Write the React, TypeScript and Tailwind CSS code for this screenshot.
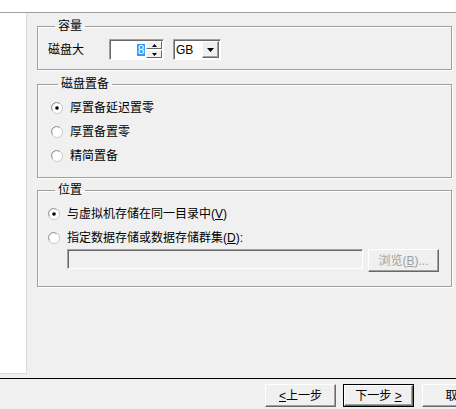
const font = "font-['Liberation_Sans','Noto_Sans_CJK_SC',sans-serif]";

function Radio({ checked }: { checked?: boolean }) {
  return (
    <svg width="12" height="12" viewBox="0 0 12 12" className="shrink-0">
      <circle cx="6" cy="6" r="5.5" fill="#fff" stroke="#c8c8c8" />
      <path d="M1.5 8.5 A5 5 0 0 1 8.5 1.5" fill="none" stroke="#9a9a9a" />
      {checked && <circle cx="6" cy="6" r="1.8" fill="#000" />}
    </svg>
  );
}

function RadioRow({
  label,
  checked,
  h = "h-[24px]",
}: {
  label: React.ReactNode;
  checked?: boolean;
  h?: string;
}) {
  return (
    <div className={`flex items-center gap-[7px] ${h}`}>
      <Radio checked={checked} />
      <span className="text-[12px] leading-[14px] text-black">{label}</span>
    </div>
  );
}

function Group({
  title,
  className,
  children,
}: {
  title: string;
  className?: string;
  children: React.ReactNode;
}) {
  return (
    <fieldset
      className={`mr-[4px] border border-[#a0a0a0] shadow-[inset_1px_1px_0_#fff,1px_1px_0_#fff] ${className}`}
    >
      <legend className="ml-[7px] px-[3px] text-[12px] leading-[14px] text-black">
        {title}
      </legend>
      {children}
    </fieldset>
  );
}

function Button({
  children,
  primary,
  disabled,
  className = "w-[71px]",
}: {
  children: React.ReactNode;
  primary?: boolean;
  disabled?: boolean;
  className?: string;
}) {
  return (
    <div
      className={`h-[23px] shrink-0 ${className} ${primary ? "border border-black" : ""}`}
    >
      <div className="flex h-full w-full items-center justify-center border border-t-white border-l-white border-r-[#696969] border-b-[#696969] bg-[#f0f0f0] shadow-[inset_-1px_-1px_0_#a0a0a0]">
        <span
          className={`text-[12px] leading-[14px] ${disabled ? "text-[#a0a0a0]" : "text-black"}`}
        >
          {children}
        </span>
      </div>
    </div>
  );
}

export default function App() {
  return (
    <div className={`h-[409px] w-[456px] overflow-hidden bg-[#f0f0f0] ${font}`}>
      <div className="h-[13px] border-b border-[#a0a0a0] bg-white" />

      <div className="flex h-[365px]">
        <div className="h-[361px] w-[27px] shrink-0 border-r border-b border-[#dadada] bg-white" />

        <div className="flex flex-1 flex-col pl-[10px] pt-[6px]">
          <Group title="容量" className="pb-[9px] pl-[10px]">
            <div className="mt-[6px] flex h-[21px] items-center">
              <span className="w-[61px] text-[12px] leading-[14px] text-black">磁盘大</span>

              {/* spin box */}
              <div className="flex h-[21px] w-[55px] items-center border border-t-[#a0a0a0] border-l-[#a0a0a0] border-r-white border-b-white bg-white shadow-[inset_1px_1px_0_#696969]">
                <div className="flex flex-1 justify-end pr-[1px]">
                  <span className="mt-[1px] bg-[#3399ff] px-[0.5px] text-[12px] leading-[12px] text-white">8</span>
                </div>
                <div className="mr-[1px] flex h-[17px] w-[16px] flex-col">
                  <div className="flex h-[8px] items-center justify-center border border-t-white border-l-white border-r-[#696969] border-b-[#696969] bg-[#f0f0f0]">
                    <svg width="5" height="3" viewBox="0 0 5 3">
                      <path d="M2.5 0 L5 3 L0 3 Z" fill="#000" />
                    </svg>
                  </div>
                  <div className="mt-[1px] flex h-[8px] items-center justify-center border border-t-white border-l-white border-r-[#696969] border-b-[#696969] bg-[#f0f0f0]">
                    <svg width="5" height="3" viewBox="0 0 5 3">
                      <path d="M0 0 L5 0 L2.5 3 Z" fill="#000" />
                    </svg>
                  </div>
                </div>
              </div>

              {/* unit combo */}
              <div className="ml-[9px] flex h-[21px] w-[48px] items-center border border-t-[#a0a0a0] border-l-[#a0a0a0] border-r-white border-b-white bg-white shadow-[inset_1px_1px_0_#696969]">
                <span className="flex-1 pl-[2px] text-[12px] leading-[14px] text-black">GB</span>
                <div className="mr-[1px] flex h-[17px] w-[17px] items-center justify-center border border-t-white border-l-white border-r-[#696969] border-b-[#696969] bg-[#f0f0f0] shadow-[inset_-1px_-1px_0_#a0a0a0]">
                  <svg width="7" height="4" viewBox="0 0 7 4">
                    <path d="M0 0 L7 0 L3.5 4 Z" fill="#000" />
                  </svg>
                </div>
              </div>
            </div>
          </Group>

          <Group title="磁盘置备" className="mt-[7px] pb-[9px] pl-[13px]">
            <div className="mt-[5px]">
              <RadioRow label="厚置备延迟置零" checked />
              <RadioRow label="厚置备置零" />
              <RadioRow label="精简置备" />
            </div>
          </Group>

          <Group title="位置" className="mt-[5px] pb-[14px] pl-[10px]">
            <div className="mt-[5px]">
              <RadioRow
                checked
                label={
                  <>
                    与虚拟机存储在同一目录中(<span className="underline">V</span>)
                  </>
                }
              />
              <RadioRow
                h="h-[23px]"
                label={
                  <>
                    指定数据存储或数据存储群集(<span className="underline">D</span>):
                  </>
                }
              />
              <div className="flex h-[23px] items-start gap-[5px] pl-[19px]">
                <div className="h-[20px] w-[296px] border border-t-[#a0a0a0] border-l-[#a0a0a0] border-r-white border-b-white bg-[#f0f0f0] shadow-[inset_1px_1px_0_#696969]" />
                <Button disabled className="w-[71px]">
                  浏览(<span className="underline">B</span>)...
                </Button>
              </div>
            </div>
          </Group>
        </div>
      </div>

      <div className="h-[1px] bg-black" />

      <div className="flex gap-[7px] pl-[265px] pt-[5px]">
        <Button>
          <span className="underline">&lt;</span>上一步
        </Button>
        <Button primary>
          下一步 <span className="underline">&gt;</span>
        </Button>
        <Button className="ml-[1px] w-[71px]">取消</Button>
      </div>
    </div>
  );
}
